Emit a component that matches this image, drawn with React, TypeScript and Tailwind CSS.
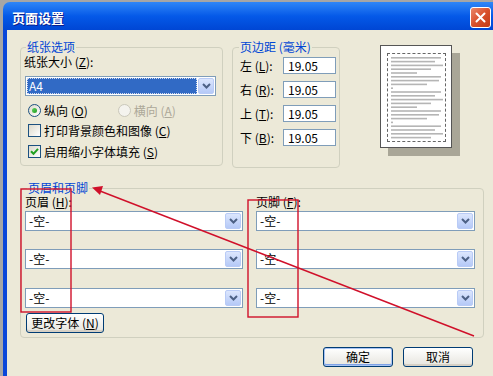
import React from "react";

const FONT = "font-['Noto_Sans_CJK_SC','Liberation_Sans',sans-serif]";

function U({ children }: { children: React.ReactNode }) {
  return <span className="underline underline-offset-[1px]">{children}</span>;
}

function Chevron() {
  return (
    <svg width="9" height="6" viewBox="0 0 9 6">
      <path d="M1 1 L4.5 4.5 L8 1" fill="none" stroke="#4D6185" strokeWidth="2" />
    </svg>
  );
}

function XPSelect({ value, className, active }: { value: string; className: string; active?: boolean }) {
  return (
    <div className={`flex h-[20px] items-stretch border border-[#7F9DB9] bg-white p-[1px] ${className}`}>
      <div className="flex flex-1 items-stretch pr-[1px]">
        {active ? (
          <span className="flex flex-1 items-center bg-[#316AC5] pl-[2px] text-white outline-1 outline-dotted outline-[#CFD9EE] -outline-offset-1">
            {value}
          </span>
        ) : (
          <span className="flex items-center pl-[2px]">{value}</span>
        )}
      </div>
      <div className="flex w-[16px] items-center justify-center rounded-[2px] border border-[#B9CBF6] bg-linear-to-b from-[#DCE6FD] to-[#B5C9F7]">
        <Chevron />
      </div>
    </div>
  );
}

function Radio({ checked, disabled, children }: { checked?: boolean; disabled?: boolean; children: React.ReactNode }) {
  return (
    <div className="flex items-center gap-[3px]">
      <span
        className={`flex h-[13px] w-[13px] items-center justify-center rounded-full border ${
          disabled ? "border-[#CAC8BB] bg-[#F4F3EE]" : "border-[#1C5180] bg-linear-to-br from-[#DCD9CB] to-white"
        }`}
      >
        {checked && <span className="h-[5px] w-[5px] rounded-full bg-linear-to-br from-[#5FD35F] to-[#1E9C1E]" />}
      </span>
      <span className={disabled ? "text-[#ACA899]" : ""}>{children}</span>
    </div>
  );
}

function Check({ checked, children }: { checked?: boolean; children: React.ReactNode }) {
  return (
    <div className="flex items-center gap-[3px]">
      <span className="flex h-[13px] w-[13px] items-center justify-center border border-[#1C5180] bg-linear-to-br from-[#DCD9CB] to-white">
        {checked && (
          <svg width="9" height="9" viewBox="0 0 9 9">
            <path d="M1 4.2 L3.5 6.8 L8 1.8" fill="none" stroke="#21A121" strokeWidth="2" />
          </svg>
        )}
      </span>
      <span>{children}</span>
    </div>
  );
}

function XPButton({ children, className, isDefault }: { children: React.ReactNode; className: string; isDefault?: boolean }) {
  return (
    <div
      className={`flex h-[20px] items-center justify-center rounded-[3px] border border-[#003C74] bg-linear-to-b from-white to-[#E6E5DE] ${
        isDefault ? "shadow-[inset_0_0_0_1px_#A8C3F3,inset_0_-1px_0_1px_#7EA2E6]" : "shadow-[inset_0_-2px_0_#D6D0C5]"
      } ${className}`}
    >
      {children}
    </div>
  );
}

function MarginRow({ label, k }: { label: string; k: string }) {
  return (
    <div className="flex items-center">
      <span className="w-[43px]">
        {label} (<U>{k}</U>):
      </span>
      <div className="flex h-[17px] w-[53px] items-center border border-[#7F9DB9] bg-white pl-[4px]">19.05</div>
    </div>
  );
}

const previewLines = [50, 44, 52, 40, 26, 50, 48, 36, 2, 50, 44, 52, 40, 26, 50, 48, 36, 2, 50, 44, 52, 40];

function PagePreview() {
  return (
    <div className="h-[103px] w-[72px] border border-[#555] bg-white p-[6px] pt-[7px] shadow-[8px_8px_0_#A9A697]">
      <div className="h-[89px] w-[59px] border border-dashed border-[#666]">
        <svg width="57" height="87" viewBox="0 0 57 87">
          {previewLines.map((w, i) => (
            <rect key={i} x="3" y={3 + i * 3.8} width={w} height="1.6" fill="#B5B5B5" />
          ))}
        </svg>
      </div>
    </div>
  );
}

function Annotations() {
  return (
    <svg className="pointer-events-none absolute inset-0" width="493" height="376" viewBox="0 0 493 376">
      <g fill="none" stroke="#D0102A" strokeWidth="1.4">
        <rect x="21" y="189" width="50" height="123" />
        <rect x="248" y="200" width="50" height="117" />
        <line x1="474" y1="336" x2="100" y2="191" />
      </g>
      <polygon points="92,187.5 103,186 100,195" fill="#D0102A" />
    </svg>
  );
}

export default function App() {
  return (
    <div
      className={`relative h-[376px] w-[493px] overflow-hidden bg-[#A6A6A6] pl-[3px] pt-[2px] text-[12px] leading-[12px] text-black ${FONT}`}
    >
      <div className="flex w-[496px] flex-col">
        <div className="flex h-[28px] items-center justify-between rounded-t-[7px] bg-linear-to-b from-[#2F86F7] via-[#0559E8] to-[#0046D4] pl-[9px] pr-[8px]">
          <span className="pt-[3px] text-[13px] font-bold leading-[13px] text-white [text-shadow:1px_1px_0_#0A1E8C]">
            页面设置
          </span>
          <div className="mt-[3px] flex h-[21px] w-[21px] items-center justify-center rounded-[3px] border border-white bg-linear-to-br from-[#E9876A] via-[#D9502B] to-[#C23A16]">
            <svg width="11" height="11" viewBox="0 0 11 11">
              <path d="M1.5 1.5 L9.5 9.5 M9.5 1.5 L1.5 9.5" stroke="white" strokeWidth="2" strokeLinecap="round" />
            </svg>
          </div>
        </div>

        <div className="h-[346px] border-l-[4px] border-[#0A46D9] bg-[#ECE9D8] pl-[13px] pt-[11px]">
          <div className="flex items-start">
            <fieldset className="h-[125px] w-[203px] rounded-[4px] border border-[#D0D0BF]">
              <legend className="ml-[5px] px-[1px] text-[#0046D5]">纸张选项</legend>
              <div className="flex flex-col pl-[3px]">
                <span className="mt-[3px]">
                  纸张大小 (<U>Z</U>):
                </span>
                <XPSelect value="A4" className="ml-[1px] mt-[8px] w-[191px]" active />
                <div className="ml-[4px] mt-[8px] flex gap-[30px]">
                  <Radio checked>
                    纵向 (<U>O</U>)
                  </Radio>
                  <Radio disabled>
                    横向 (<U>A</U>)
                  </Radio>
                </div>
                <div className="ml-[4px] mt-[7px]">
                  <Check>
                    打印背景颜色和图像 (<U>C</U>)
                  </Check>
                </div>
                <div className="ml-[4px] mt-[8px]">
                  <Check checked>
                    启用缩小字体填充 (<U>S</U>)
                  </Check>
                </div>
              </div>
            </fieldset>

            <fieldset className="ml-[9px] h-[127px] w-[108px] rounded-[4px] border border-[#D0D0BF]">
              <legend className="ml-[6px] px-[1px] text-[#0046D5]">页边距 (毫米)</legend>
              <div className="mt-[4px] flex flex-col gap-[7px] pl-[7px]">
                <MarginRow label="左" k="L" />
                <MarginRow label="右" k="R" />
                <MarginRow label="上" k="T" />
                <MarginRow label="下" k="B" />
              </div>
            </fieldset>

            <div className="ml-[40px] mt-[4px]">
              <PagePreview />
            </div>
          </div>

          <fieldset className="mt-[14px] h-[156px] w-[464px] rounded-[4px] border border-[#D0D0BF]">
            <legend className="ml-[6px] px-[1px] text-[#0046D5]">页眉和页脚</legend>
            <div className="flex flex-col pl-[4px]">
              <div className="mt-[2px] flex gap-[13px]">
                <div className="flex w-[218px] flex-col">
                  <span>
                    页眉 (<U>H</U>):
                  </span>
                  <XPSelect value="-空-" className="mt-[3px] w-[218px]" />
                  <XPSelect value="-空-" className="mt-[18px] w-[218px]" />
                  <XPSelect value="-空-" className="mt-[19px] w-[218px]" />
                </div>
                <div className="flex w-[219px] flex-col">
                  <span>
                    页脚 (<U>F</U>):
                  </span>
                  <XPSelect value="-空-" className="mt-[3px] w-[219px]" />
                  <XPSelect value="-空-" className="mt-[18px] w-[219px]" />
                  <XPSelect value="-空-" className="mt-[19px] w-[219px]" />
                </div>
              </div>
              <XPButton className="ml-[1px] mt-[5px] w-[78px]">
                更改字体 (<U>N</U>)
              </XPButton>
            </div>
          </fieldset>

          <div className="mt-[9px] flex w-[464px] justify-end gap-[10px] pr-[11px]">
            <XPButton className="w-[70px]" isDefault>
              确定
            </XPButton>
            <XPButton className="w-[70px]">取消</XPButton>
          </div>
        </div>
      </div>
      <Annotations />
    </div>
  );
}
